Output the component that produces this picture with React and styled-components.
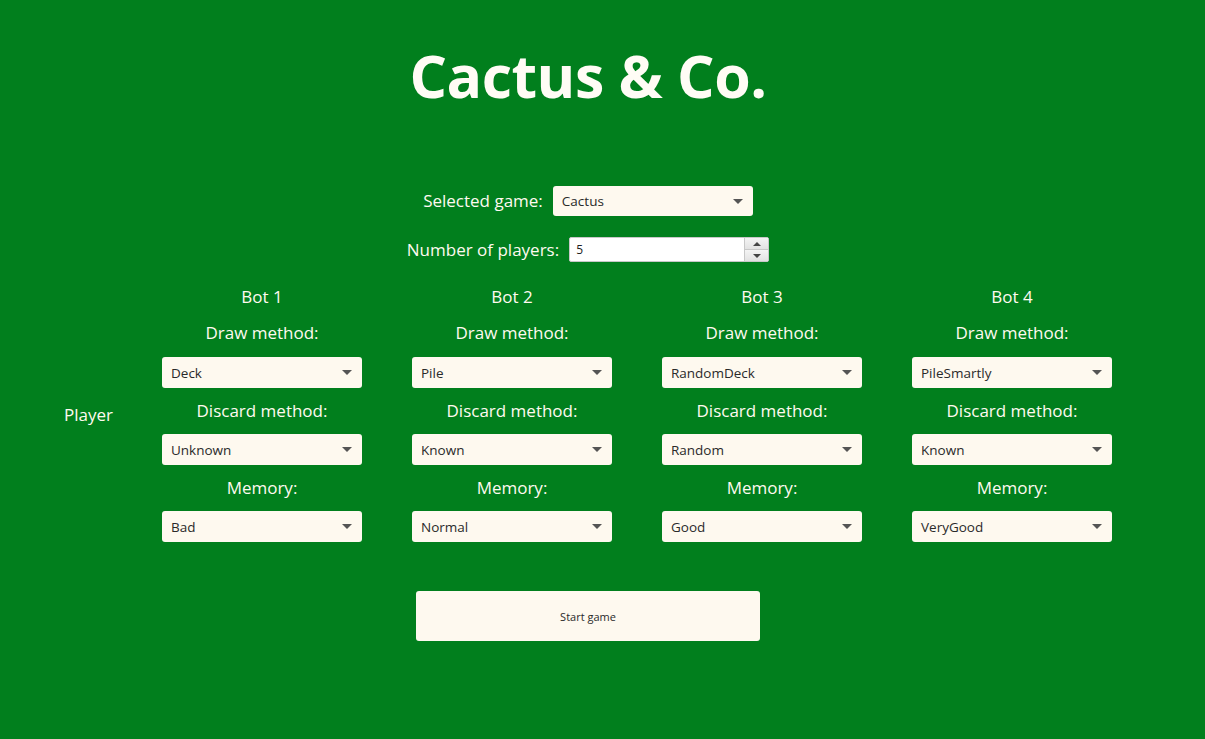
import React from "react";
import styled, { createGlobalStyle } from "styled-components";

const Global = createGlobalStyle`
  html, body { margin: 0; padding: 0; background: #017f1d; }
  body { font-family: "Open Sans", "Noto Sans", sans-serif; }
`;

const Page = styled.div`
  width: 1176px;
  height: 739px;
  display: flex;
  flex-direction: column;
  align-items: center;
  color: #fffaf0;
  overflow: hidden;
`;

const Title = styled.h1`
  margin: 35px 0 0;
  font-size: 59px;
  font-weight: 700;
  line-height: 80px;
  letter-spacing: -0.5px;
  color: #fffcf5;
`;

const Row = styled.div`
  display: flex;
  align-items: center;
  gap: 10px;
  margin-top: ${(p) => p.$mt}px;
`;

const Label = styled.span`
  font-size: 17px;
  line-height: 22px;
  color: #fffaf0;
`;

const ComboBox = styled.div`
  box-sizing: border-box;
  width: 200px;
  height: ${(p) => p.$h || 31}px;
  background: #fef9ef;
  border-radius: 3px;
  display: flex;
  align-items: center;
  justify-content: space-between;
  padding: 0 9px 0 9px;
  font-size: 13.5px;
  color: #2a2a2a;
`;

const Arrow = styled.span`
  width: 0;
  height: 0;
  border-left: 5px solid transparent;
  border-right: 5px solid transparent;
  border-top: 5px solid #555;
  margin-right: 1px;
`;

const Spinner = styled.div`
  box-sizing: border-box;
  width: 200px;
  height: 25px;
  background: #fff;
  border: 1px solid #c8c8c8;
  border-radius: 2px;
  display: flex;
  font-size: 12px;
  color: #222;
`;

const SpinValue = styled.div`
  flex: 1;
  display: flex;
  align-items: center;
  padding-left: 6px;
`;

const SpinButtons = styled.div`
  width: 23px;
  display: flex;
  flex-direction: column;
  border-left: 1px solid #c8c8c8;
`;

const SpinBtn = styled.div`
  flex: 1;
  background: linear-gradient(#f4f4f4, #e2e2e2);
  display: flex;
  align-items: center;
  justify-content: center;
  & + & { border-top: 1px solid #c8c8c8; }
`;

const SmallArrow = styled.span`
  width: 0;
  height: 0;
  border-left: 4px solid transparent;
  border-right: 4px solid transparent;
  ${(p) => (p.$up ? "border-bottom: 4px solid #444;" : "border-top: 4px solid #444;")}
`;

const PlayersRow = styled.div`
  display: flex;
  align-items: center;
  gap: 50px;
  margin-top: 24px;
`;

const PlayerLabel = styled.span`
  font-size: 17px;
  width: 48px;
  white-space: nowrap;
  color: #fffaf0;
`;

const BotGrid = styled.div`
  display: grid;
  grid-template-columns: repeat(4, 200px);
  column-gap: 50px;
`;

const BotCol = styled.div`
  display: flex;
  flex-direction: column;
  align-items: center;
`;

const BotTitle = styled.div`
  font-size: 17px;
  line-height: 22px;
  height: 22px;
  margin-bottom: 14px;
`;

const FieldLabel = styled.div`
  font-size: 17px;
  line-height: 22px;
  height: 22px;
  margin-bottom: ${(p) => p.$mb || 13}px;
`;

const FieldCombo = styled(ComboBox)`
  margin-bottom: ${(p) => p.$mb || 0}px;
`;

const StartButton = styled.button`
  margin-top: 49px;
  width: 344px;
  height: 50px;
  background: #fef9ef;
  border: none;
  border-radius: 3px;
  font-family: "Open Sans", "Noto Sans", sans-serif;
  font-size: 11px;
  color: #2a2a2a;
`;

const bots = [
  { name: "Bot 1", draw: "Deck", discard: "Unknown", memory: "Bad" },
  { name: "Bot 2", draw: "Pile", discard: "Known", memory: "Normal" },
  { name: "Bot 3", draw: "RandomDeck", discard: "Random", memory: "Good" },
  { name: "Bot 4", draw: "PileSmartly", discard: "Known", memory: "VeryGood" },
];

function Combo({ value, ...rest }) {
  return (
    <FieldCombo {...rest}>
      <span>{value}</span>
      <Arrow />
    </FieldCombo>
  );
}

export default function App() {
  return (
    <>
      <Global />
      <Page>
        <Title>Cactus &amp; Co.</Title>
        <Row $mt={71}>
          <Label>Selected game:</Label>
          <ComboBox $h={30}>
            <span>Cactus</span>
            <Arrow />
          </ComboBox>
        </Row>
        <Row $mt={21}>
          <Label>Number of players:</Label>
          <Spinner>
            <SpinValue>5</SpinValue>
            <SpinButtons>
              <SpinBtn><SmallArrow $up /></SpinBtn>
              <SpinBtn><SmallArrow /></SpinBtn>
            </SpinButtons>
          </Spinner>
        </Row>
        <PlayersRow>
          <PlayerLabel>Player</PlayerLabel>
          <BotGrid>
            {bots.map((b) => (
              <BotCol key={b.name}>
                <BotTitle>{b.name}</BotTitle>
                <FieldLabel>Draw method:</FieldLabel>
                <Combo value={b.draw} $mb={12} />
                <FieldLabel $mb={12}>Discard method:</FieldLabel>
                <Combo value={b.discard} $mb={12} />
                <FieldLabel $mb={12}>Memory:</FieldLabel>
                <Combo value={b.memory} />
              </BotCol>
            ))}
          </BotGrid>
        </PlayersRow>
        <StartButton>Start game</StartButton>
      </Page>
    </>
  );
}
